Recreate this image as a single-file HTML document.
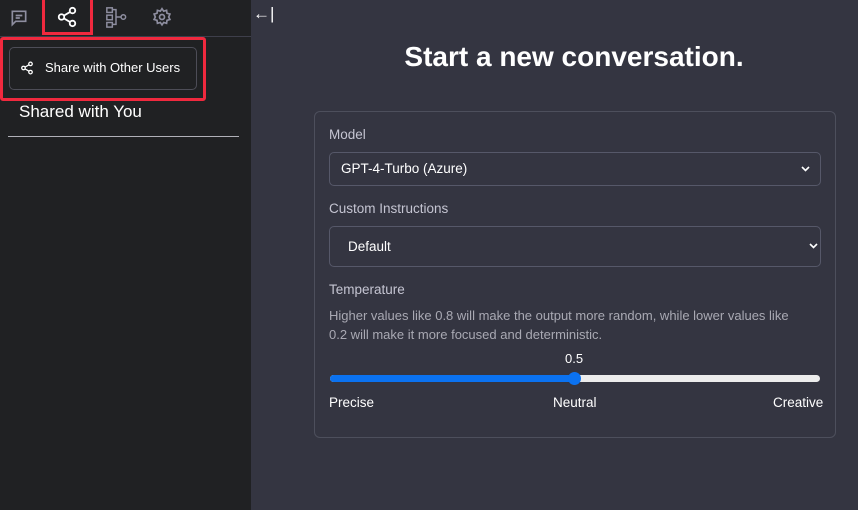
<!DOCTYPE html><html><head><style>
body{margin:0;width:858px;height:510px;background:#343541;font-family:"Liberation Sans",sans-serif;position:relative;overflow:hidden;color:#ececf1}
.a{position:absolute}
.sb{left:0;top:0;width:251px;height:510px;background:#202123}
.lbl{color:#c5c5d2;font-size:13.5px}
.sel{left:329px;width:490px;border:1px solid #565869;border-radius:5px;background:#343541;font-size:13.5px;color:#fff}
</style></head><body>
<div class="a sb"></div>
<div class="a" style="left:0;top:36px;width:251px;height:1px;background:#3e3f4b"></div>
<svg class="a" style="left:9px;top:8px" width="20" height="20" viewBox="0 0 24 24" fill="none" stroke="#8e8ea0" stroke-width="2"><path d="M4 4h16v12H8l-4 4z"/><path d="M8 9h8M8 12h5"/></svg>
<div class="a" style="left:42px;top:0;width:45px;height:32px;border:3px solid #f0293e;border-top:none;background:#202123"></div>
<svg class="a" style="left:56px;top:6px" width="22" height="22" viewBox="0 0 24 24" fill="none" stroke="#fff" stroke-width="2"><circle cx="18" cy="5" r="3"/><circle cx="6" cy="12" r="3"/><circle cx="18" cy="19" r="3"/><path d="M8.6 13.5l6.8 4M15.4 6.5l-6.8 4"/></svg>
<svg class="a" style="left:104px;top:6px" width="24" height="22" viewBox="0 0 24 24" fill="none" stroke="#8e8ea0" stroke-width="1.6"><rect x="2" y="2" width="6" height="5"/><rect x="2" y="10" width="6" height="5"/><rect x="2" y="18" width="6" height="5"/><path d="M8 4h4v16H8M12 12h5"/><circle cx="20" cy="12" r="2.5"/></svg>
<svg class="a" style="left:152px;top:7px" width="20" height="20" viewBox="0 0 24 24" fill="none" stroke="#8e8ea0" stroke-width="2"><circle cx="12" cy="12" r="3"/><path d="M12 2l2 3 3.5-1 .5 3.5 3.5 1-1.5 3.5 1.5 3-3.5 1-.5 3.5-3.5-1-2 3-2-3-3.5 1-.5-3.5-3.5-1 1.5-3-1.5-3.5 3.5-1 .5-3.5 3.5 1z"/></svg>
<div class="a" style="left:0;top:37px;width:200px;height:58px;border:3px solid #f0293e;border-radius:3px"></div>
<div class="a" style="left:9px;top:47px;width:186px;height:41px;border:1px solid #4d4d57;border-radius:5px"></div>
<svg class="a" style="left:20px;top:61px" width="14" height="14" viewBox="0 0 24 24" fill="none" stroke="#fff" stroke-width="2.2"><circle cx="18" cy="5" r="3"/><circle cx="6" cy="12" r="3"/><circle cx="18" cy="19" r="3"/><path d="M8.6 13.5l6.8 4M15.4 6.5l-6.8 4"/></svg>
<div class="a" style="left:45px;top:60px;font-size:13px;color:#fff">Share with Other Users</div>
<div class="a" style="left:19px;top:102px;font-size:17px;color:#fff">Shared with You</div>
<div class="a" style="left:8px;top:136px;width:231px;height:1px;background:#b0b0b8"></div>
<div class="a" style="left:253px;top:4px;font-size:17px;color:#fff">←|</div>
<div class="a" style="left:290px;top:41px;width:568px;text-align:center;font-size:28px;font-weight:bold;color:#fff">Start a new conversation.</div>
<div class="a" style="left:314px;top:111px;width:520px;height:325px;border:1px solid #4d4f5c;border-radius:6px"></div>
<div class="a lbl" style="left:329px;top:127px">Model</div>
<div class="a sel" style="top:152px;height:32px"><span class="a" style="left:11px;top:8px">GPT-4-Turbo (Azure)</span><svg class="a" style="right:10px;top:13px" width="9" height="6" viewBox="0 0 9 6"><path d="M1 1l3.5 3.5L8 1" fill="none" stroke="#fff" stroke-width="1.6"/></svg></div>
<div class="a lbl" style="left:329px;top:201px">Custom Instructions</div>
<div class="a sel" style="top:226px;height:39px"><span class="a" style="left:18px;top:12px">Default</span><svg class="a" style="right:2px;top:16px" width="9" height="6" viewBox="0 0 9 6"><path d="M1 1l3.5 3.5L8 1" fill="none" stroke="#fff" stroke-width="1.6"/></svg></div>
<div class="a lbl" style="left:329px;top:282px">Temperature</div>
<div class="a lbl" style="left:329px;top:307px;width:478px;line-height:18.5px;color:#a9a9b3;font-size:13px">Higher values like 0.8 will make the output more random, while lower values like 0.2 will make it more focused and deterministic.</div>
<div class="a" style="left:565px;top:351px;font-size:13px;color:#fff">0.5</div>
<div class="a" style="left:330px;top:375px;width:490px;height:7px;border-radius:4px;background:#ececec"></div>
<div class="a" style="left:330px;top:375px;width:245px;height:7px;border-radius:4px;background:#0b72f0"></div>
<div class="a" style="left:568px;top:372px;width:13px;height:13px;border-radius:50%;background:#0b72f0"></div>
<div class="a" style="left:329px;top:395px;font-size:13.5px;color:#fff">Precise</div>
<div class="a" style="left:553px;top:395px;font-size:13.5px;color:#fff">Neutral</div>
<div class="a" style="left:773px;top:395px;font-size:13.5px;color:#fff">Creative</div>
</body></html>
